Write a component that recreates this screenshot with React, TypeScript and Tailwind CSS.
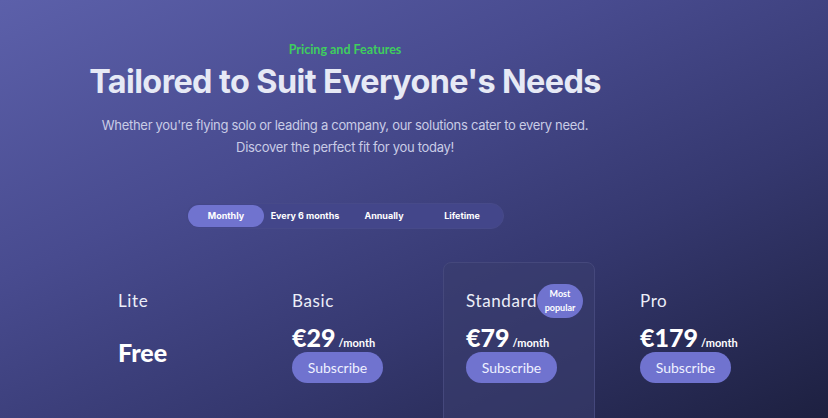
import React from "react";

const plans = [
  { name: "Lite", price: null },
  { name: "Basic", price: "€29" },
  { name: "Standard", price: "€79", popular: true },
  { name: "Pro", price: "€179" },
];

export default function App() {
  return (
    <div className="relative h-[418px] w-[828px] overflow-hidden bg-[linear-gradient(155deg,#5c60aa_0%,#484b8f_35%,#35386f_65%,#1d2040_100%)] font-['Inter',sans-serif]">
      <div className="flex w-[690px] flex-col items-center pt-[42px] text-center">
        <div className="font-['Lato',sans-serif] text-[12.5px] font-bold leading-[15px] text-[#3fce5e]">
          Pricing and Features
        </div>
        <h1 className="mt-[5px] text-[32.4px] font-bold leading-[40px] tracking-[-0.6px] text-[#e6e9f5]">
          Tailored to Suit Everyone's Needs
        </h1>
        <p className="mt-[12px] text-[13px] leading-[22px] tracking-[-0.3px] text-[#c9cce6]">
          Whether you're flying solo or leading a company, our solutions cater to every need.
          <br />
          Discover the perfect fit for you today!
        </p>
        <div className="mt-[45px] flex h-[26px] w-[318px] items-center rounded-full border border-[#474a89] bg-[#43468a] p-[1px] text-[9px] font-bold text-white">
          <div className="flex h-full w-[76px] items-center justify-center rounded-full bg-[#7073cf]">Monthly</div>
          <div className="flex h-full w-[82px] items-center justify-center">Every 6 months</div>
          <div className="flex h-full w-[76px] items-center justify-center">Annually</div>
          <div className="flex h-full w-[80px] items-center justify-center">Lifetime</div>
        </div>
      </div>
      <div className="mt-[33px] grid grid-cols-[152px_152px_152px_152px] gap-x-[22px] pl-[95px] font-['Lato',sans-serif]">
        {plans.map((p) => (
          <div
            key={p.name}
            className={
              "relative h-[170px] px-[22px] pt-[28px] " +
              (p.popular ? "rounded-[8px] border border-[#45487c] bg-[#3a3d6e]/60" : "border border-transparent")
            }
          >
            <div className="relative flex h-[20px] items-center">
              <span className="text-[17px] leading-[20px] tracking-[0.6px] text-[#eceef8]">{p.name}</span>
              {p.popular && (
                <span className="absolute left-[71px] top-[-7px] flex h-[34px] w-[46px] flex-col items-center justify-center rounded-full bg-[#7073cf] text-[9px] font-bold leading-[14px] text-white">
                  <span>Most</span>
                  <span>popular</span>
                </span>
              )}
            </div>
            {p.price ? (
              <>
                <div className="mt-[12px] flex items-baseline">
                  <span className="text-[25px] font-black leading-[28px] text-white">{p.price}</span>
                  <span className="ml-[3px] text-[11px] font-bold text-white">/month</span>
                </div>
                <button className="h-[31px] w-[91px] rounded-full bg-[#7073cf] text-[14px] text-[#eef0ff]">
                  Subscribe
                </button>
              </>
            ) : (
              <div className="mt-[27px] text-[25px] font-black leading-[28px] text-white">Free</div>
            )}
          </div>
        ))}
      </div>
    </div>
  );
}
